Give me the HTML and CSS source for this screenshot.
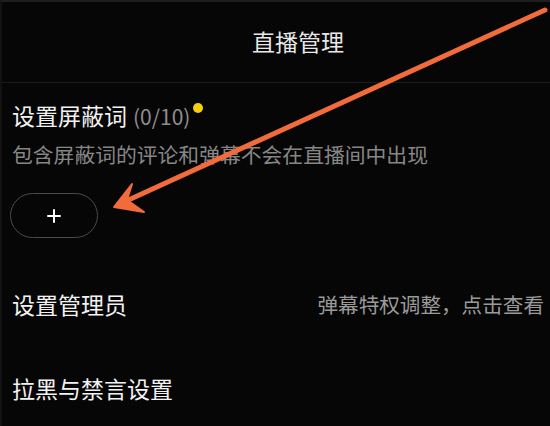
FILE: index.html
```html
<!DOCTYPE html>
<html lang="zh-CN">
<head>
<meta charset="utf-8">
<title>直播管理</title>
<link rel="stylesheet" href="styles.css">
</head>
<body>
<div class="screen">
  <header class="topbar">
    <h1 class="topbar-title">直播管理</h1>
  </header>
  <main class="content">
    <section class="block-words">
      <div class="block-title">设置屏蔽词 <span class="count">(0/10)</span><span class="dot"></span></div>
      <p class="block-desc">包含屏蔽词的评论和弹幕不会在直播间中出现</p>
      <button class="add-btn" type="button" aria-label="添加">
        <svg class="plus" viewBox="0 0 14 14" width="14" height="14"><path d="M7 1V13M1 7H13" stroke="#fff" stroke-width="2" stroke-linecap="round"/></svg>
      </button>
    </section>
    <div class="row row-admin">
      <span class="row-label">设置管理员</span>
      <span class="row-hint">弹幕特权调整，点击查看</span>
    </div>
    <div class="row row-ban">
      <span class="row-label">拉黑与禁言设置</span>
    </div>
  </main>
  <svg class="arrow" viewBox="0 0 550 426" width="550" height="426">
    <line x1="545" y1="10" x2="124" y2="202" stroke="#f26b3a" stroke-width="5" stroke-linecap="round"/>
    <polygon points="114,207 132,184 127,200 144,212" fill="#f26b3a" stroke="#f26b3a" stroke-width="2" stroke-linejoin="round"/>
  </svg>
</div>
</body>
</html>
```
FILE: styles.css
```css
html, body {
  margin: 0;
  padding: 0;
  background: #050505;
}
body {
  font-family: "Noto Sans CJK SC", "Noto Sans", sans-serif;
  color: #ececec;
}
.screen {
  position: relative;
  width: 550px;
  height: 426px;
  overflow: hidden;
  background: #060606;
  box-sizing: border-box;
  border-top: 2px solid #1e1e1e;
  border-left: 2px solid #121212;
}
.topbar {
  height: 81px;
  box-sizing: border-box;
  border-bottom: 1px solid #1b1b1b;
  display: flex;
  align-items: center;
  justify-content: center;
  padding-left: 44px;
  padding-bottom: 3px;
}
.topbar-title {
  margin: 0;
  font-size: 23px;
  font-weight: 400;
  line-height: 30px;
  color: #e8e8e8;
}
.content {
  padding: 0 6px 0 10px;
}
.block-words {
  padding-top: 17px;
}
.block-title {
  font-size: 23px;
  line-height: 30px;
  color: #f2f2f2;
  display: flex;
  align-items: flex-start;
}
.count {
  font-size: 21px;
  color: #8e8e8e;
  margin-left: 6px;
  line-height: 32px;
}
.dot {
  width: 10px;
  height: 10px;
  border-radius: 50%;
  background: #f6cf10;
  margin-top: 3px;
  margin-left: 3px;
}
.block-desc {
  margin: 8px 0 0;
  font-size: 20.8px;
  line-height: 28px;
  color: #868686;
}
.add-btn {
  display: flex;
  align-items: center;
  justify-content: center;
  margin-top: 25px;
  margin-left: -2px;
  width: 88px;
  height: 45px;
  border-radius: 23px;
  border: 1.5px solid #4a4a4a;
  background: transparent;
  padding: 0;
}
.plus {
  display: block;
}
.row {
  display: flex;
  align-items: center;
  justify-content: space-between;
  height: 30px;
}
.row-admin {
  margin-top: 51px;
}
.row-ban {
  margin-top: 54px;
}
.row-label {
  font-size: 23px;
  line-height: 30px;
  color: #f2f2f2;
}
.row-hint {
  font-size: 20.6px;
  line-height: 30px;
  color: #9a9a9a;
}
.arrow {
  position: absolute;
  left: -2px;
  top: -2px;
  pointer-events: none;
}
```
